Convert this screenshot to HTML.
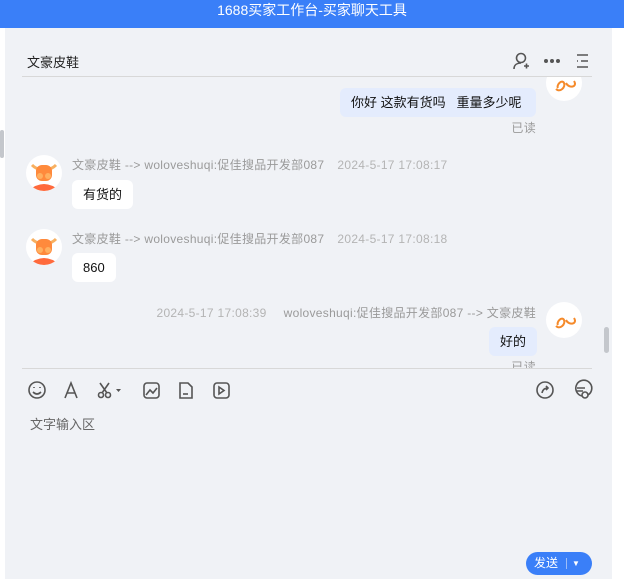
<!DOCTYPE html><html><head><meta charset="utf-8"><style>
*{margin:0;padding:0;box-sizing:border-box}
body{width:624px;height:579px;background:#fff;font-family:"Liberation Sans","Noto Sans CJK SC",sans-serif;position:relative;overflow:hidden}
.a{position:absolute}
.t{white-space:nowrap}
.bar{left:0;top:0;width:624px;height:28px;background:#3a7ff8;color:#fff;font-size:14px;text-align:center;line-height:20px}
.panel{left:5px;top:28px;width:607px;height:551px;background:#f0f2f6}
.meta{font-size:12px;color:#9a9a9a;letter-spacing:0.3px}
.bub{font-size:13px;color:#111;border-radius:6px;line-height:29px;padding:0 11px;height:29px}
.av{width:36px;height:36px;border-radius:50%;background:#fff;overflow:hidden}
</style></head><body>
<div class="a bar">1688买家工作台-买家聊天工具</div>
<div class="a panel"></div>
<div class="a" style="left:0;top:130px;width:4px;height:28px;background:#c4c7cc;border-radius:2px"></div>
<div class="a t" style="left:27px;top:52px;font-size:13px;color:#222">文豪皮鞋</div>
<svg class="a" style="left:510px;top:50px" width="90" height="22" viewBox="0 0 90 22" fill="none" stroke="#555" stroke-width="1.6">
<circle cx="11" cy="8" r="4.5"/><path d="M4 19c0-4 3-6 7-6M14 16h5M16.5 13.5v5"/>
<circle cx="36" cy="11" r="1.2" fill="#555"/><circle cx="42" cy="11" r="1.2" fill="#555"/><circle cx="48" cy="11" r="1.2" fill="#555"/>
<path d="M67 5h11M71 11h7M67 17h11M67 11h1"/></svg>
<div class="a" style="left:22px;top:76px;width:570px;height:1px;background:#d8d8d8"></div>
<div style="position:absolute;left:5px;top:77px;width:600px;height:291px;overflow:hidden">
<div class="a av" style="left:541px;top:-12px"><svg width="36" height="36"><path d="M10 24c4 4 10-2 8-6s-8 2-6 5M20 18c3 6 12 4 8-2" stroke="#f58a2a" stroke-width="2" fill="none"/></svg></div>
<div class="a bub t" style="left:335px;top:11px;width:196px;background:#e4ecfd">你好 这款有货吗&nbsp;&nbsp; 重量多少呢</div>
<div class="a meta t" style="right:69px;top:42px">已读</div>
<div class="a av" style="left:21px;top:78px"><svg width="36" height="36"><path d="M6 10q4 4 8 4M30 10q-4 4-8 4" stroke="#f8b060" stroke-width="3" fill="none"/><rect x="10" y="10" width="16" height="16" rx="6" fill="#ff8a3c"/><circle cx="14" cy="21" r="3" fill="#ffb060"/><circle cx="22" cy="21" r="3" fill="#ffb060"/><path d="M2 36q16-14 32 0" fill="#ff6a3c"/></svg></div>
<div class="a meta t" style="left:67px;top:79px">文豪皮鞋 --&gt; woloveshuqi:促佳搜品开发部087<span style="color:#b4b4b4;margin-left:13px">2024-5-17 17:08:17</span></div>
<div class="a bub t" style="left:67px;top:103px;background:#fff">有货的</div>
<div class="a av" style="left:21px;top:152px"><svg width="36" height="36"><path d="M6 10q4 4 8 4M30 10q-4 4-8 4" stroke="#f8b060" stroke-width="3" fill="none"/><rect x="10" y="10" width="16" height="16" rx="6" fill="#ff8a3c"/><circle cx="14" cy="21" r="3" fill="#ffb060"/><circle cx="22" cy="21" r="3" fill="#ffb060"/><path d="M2 36q16-14 32 0" fill="#ff6a3c"/></svg></div>
<div class="a meta t" style="left:67px;top:153px">文豪皮鞋 --&gt; woloveshuqi:促佳搜品开发部087<span style="color:#b4b4b4;margin-left:13px">2024-5-17 17:08:18</span></div>
<div class="a bub t" style="left:67px;top:176px;background:#fff">860</div>
<div class="a meta t" style="right:69px;top:227px"><span style="color:#b4b4b4;margin-right:17px">2024-5-17 17:08:39</span>woloveshuqi:促佳搜品开发部087 --&gt; 文豪皮鞋</div>
<div class="a av" style="left:541px;top:225px"><svg width="36" height="36"><path d="M10 24c4 4 10-2 8-6s-8 2-6 5M20 18c3 6 12 4 8-2" stroke="#f58a2a" stroke-width="2" fill="none"/></svg></div>
<div class="a bub t" style="left:484px;top:250px;background:#e4ecfd">好的</div>
<div class="a meta t" style="right:69px;top:281px">已读</div>
</div>
<div class="a" style="left:604px;top:327px;width:5px;height:26px;background:#c4c7cc;border-radius:3px"></div>
<div class="a" style="left:22px;top:368px;width:570px;height:1px;background:#d8d8d8"></div>
<svg class="a" style="left:26px;top:379px" width="570" height="22" fill="none" stroke="#555" stroke-width="1.6">
<circle cx="11" cy="11" r="8"/><path d="M7 13q4 4 8 0M8 8v1M14 8v1"/>
<path d="M39 19l6-15 6 15M41 14h8"/>
<circle cx="75" cy="16" r="2.5"/><circle cx="82" cy="16" r="2.5"/><path d="M76 14l7-10M81 14l-7-10"/><path d="M90 10h5l-2.5 3z" fill="#555" stroke="none"/>
<rect x="118" y="4" width="15" height="15" rx="3"/><path d="M120 16l4-5 3 3 4-5"/>
<path d="M154 4h8l4 4v11h-12z"/><path d="M157 15h5"/>
<rect x="188" y="4" width="15" height="15" rx="3"/><path d="M193 8l5 3.5-5 3.5z"/>
<circle cx="519" cy="11" r="8"/><path d="M516 14q1-5 6-5M520 7l2 2-2 2"/>
<path d="M556 17a8 8 0 1 1 6-1"/><path d="M551 9h8M551 12h6"/><circle cx="559" cy="16" r="3"/></svg>
<div class="a t" style="left:30px;top:414px;font-size:13px;color:#666">文字输入区</div>
<div class="a" style="left:526px;top:552px;width:66px;height:23px;background:#3a7ff8;border-radius:12px;color:#fff;font-size:12px;line-height:23px;padding-left:8px">发送<span style="position:absolute;left:40px;top:6px;width:1px;height:11px;background:#9dbdf8"></span><span style="position:absolute;left:46px;top:0;font-size:8px">▼</span></div>
</body></html>
